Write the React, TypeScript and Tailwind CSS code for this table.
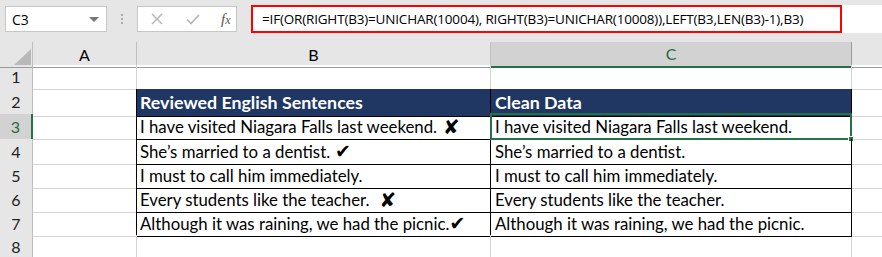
import React from "react";

const Cross = ({ ml }: { ml: string }) => (
  <span className={ml + " font-['DejaVu_Sans',sans-serif] text-[20px] leading-none"}>✘</span>
);
const Tick = ({ ml }: { ml: string }) => (
  <span className={ml + " font-['DejaVu_Sans',sans-serif] text-[19px] leading-none"}>✔</span>
);

const rowsData: { n: number; b: React.ReactNode; c: string }[] = [
  { n: 3, b: <>I have visited Niagara Falls last weekend.<Cross ml="ml-[6px]" /></>, c: "I have visited Niagara Falls last weekend." },
  { n: 4, b: <>She’s married to a dentist.<Tick ml="ml-[5px]" /></>, c: "She’s married to a dentist." },
  { n: 5, b: "I must to call him immediately.", c: "I must to call him immediately." },
  { n: 6, b: <>Every students like the teacher.<Cross ml="ml-[10px]" /></>, c: "Every students like the teacher." },
  { n: 7, b: <>Although it was raining, we had the picnic.<Tick ml="ml-0" /></>, c: "Although it was raining, we had the picnic." },
];

const grid = "grid grid-cols-[33px_104px_354px_361px_1fr]";

function RowHead({ n, active = false }: { n: number; active?: boolean }) {
  return (
    <div
      className={
        "flex items-center justify-center border-b border-[#d4d4d4] text-[16px] " +
        (active
          ? "bg-[#d2d2d2] border-r-2 border-r-[#217346] text-[#1e6b40]"
          : "bg-[#e6e6e6] border-r border-r-[#bfbfbf] text-[#222]")
      }
    >
      {n}
    </div>
  );
}

export default function App() {
  return (
    <div className="w-[882px] h-[257px] overflow-hidden bg-[#e6e6e6] font-['Lato',sans-serif] text-black">
      {/* formula bar */}
      <div className="flex h-[42px] items-start pt-[5px]">
        <div className="ml-[5px] mt-[1px] flex h-[26px] w-[102px] items-center justify-between border border-[#c6c6c6] bg-white pl-[6px] pr-[7px] font-['Open_Sans',sans-serif] text-[14px]">
          <span>C3</span>
          <span className="h-0 w-0 border-x-[5px] border-t-[5px] border-x-transparent border-t-[#777]" />
        </div>
        <div className="ml-[14px] mt-[9px] flex flex-col gap-[2px]">
          <span className="h-[2px] w-[2px] bg-[#aaa]" />
          <span className="h-[2px] w-[2px] bg-[#aaa]" />
          <span className="h-[2px] w-[2px] bg-[#aaa]" />
        </div>
        <div className="ml-[14px] mt-[1px] flex h-[26px] w-[100px] items-center border border-[#c6c6c6] bg-white">
          <svg className="ml-[13px]" width="12" height="12" viewBox="0 0 12 12">
            <path d="M1 1L11 11M11 1L1 11" stroke="#b4b4b4" strokeWidth="1.4" fill="none" />
          </svg>
          <svg className="ml-[23px]" width="14" height="11" viewBox="0 0 14 11">
            <path d="M1 5.5L5 9.5L13 1" stroke="#b4b4b4" strokeWidth="1.6" fill="none" />
          </svg>
          <span className="ml-[21px] font-['Liberation_Serif',serif] text-[15px] italic text-[#555]">
            f<span className="text-[12px]">x</span>
          </span>
        </div>
        <div className="ml-[14px] flex h-[28px] flex-1 bg-white">
          <div className="flex h-[28px] w-[591px] items-center border-2 border-[#ff0000] pl-[9px] font-['Open_Sans',sans-serif] text-[13.5px] tracking-[-0.18px]">
            =IF(OR(RIGHT(B3)=UNICHAR(10004), RIGHT(B3)=UNICHAR(10008)),LEFT(B3,LEN(B3)-1),B3)
          </div>
        </div>
      </div>

      {/* column headers */}
      <div className={grid + " h-[23px] text-[16px]"}>
        <div className="relative border-r border-b border-[#9b9b9b] border-r-[#bfbfbf]">
          <svg className="absolute right-[1px] bottom-[2px]" width="17" height="16" viewBox="0 0 17 16">
            <path d="M17 0L17 16L0 16Z" fill="#b9b9b9" />
          </svg>
        </div>
        <div className="flex items-center justify-center border-r border-r-[#bfbfbf] border-b border-b-[#9b9b9b]">A</div>
        <div className="flex items-center justify-center border-r border-r-[#bfbfbf] border-b border-b-[#9b9b9b]">B</div>
        <div className="flex items-center justify-center border-r border-r-[#9b9b9b] border-b-2 border-b-[#217346] bg-[#d2d2d2] text-[#1e6b40]">C</div>
        <div className="border-b border-b-[#9b9b9b]" />
      </div>

      {/* sheet */}
      <div className="bg-white font-['Lato',sans-serif] text-[16.8px]">
        {/* row 1 */}
        <div className={grid + " h-[24px]"}>
          <RowHead n={1} />
          <div className="border-r border-b border-[#d4d4d4]" />
          <div className="border-r border-[#d4d4d4] border-b border-b-black" />
          <div className="border-r border-[#d4d4d4] border-b border-b-black" />
          <div className="border-b border-[#d4d4d4]" />
        </div>
        {/* row 2 */}
        <div className={grid + " h-[25px]"}>
          <RowHead n={2} />
          <div className="border-r border-r-black border-b border-b-[#d4d4d4]" />
          <div className="flex items-center border-r border-b border-black bg-[#203764] pl-[3px] text-[17.8px] font-bold text-white">
            Reviewed English Sentences
          </div>
          <div className="flex items-center border-r border-b border-black bg-[#203764] pl-[4px] text-[17.8px] font-bold text-white">
            Clean Data
          </div>
          <div className="border-b border-[#d4d4d4]" />
        </div>
        {rowsData.map((r) => (
          <div key={r.n} className={grid + (r.n === 3 ? " h-[25px]" : " h-[24px]")}>
            <RowHead n={r.n} active={r.n === 3} />
            <div className="border-r border-r-black border-b border-b-[#d4d4d4]" />
            <div className="flex items-center border-r border-b border-black pl-[3px]">{r.b}</div>
            <div className="relative flex items-center border-r border-b border-black pl-[4px]">
              {r.c}
              {r.n === 3 && (
                <div className="absolute -top-[1px] -left-[1px] -right-[1px] -bottom-[1px] border-2 border-[#217346]">
                  <div className="absolute -right-[4px] -bottom-[4px] h-[6px] w-[6px] border border-white bg-[#217346]" />
                </div>
              )}
            </div>
            <div className="border-b border-[#d4d4d4]" />
          </div>
        ))}
        {/* row 8 */}
        <div className={grid + " h-[24px]"}>
          <RowHead n={8} />
          <div className="border-r border-b border-[#d4d4d4]" />
          <div className="border-r border-b border-[#d4d4d4]" />
          <div className="border-r border-b border-[#d4d4d4]" />
          <div className="border-b border-[#d4d4d4]" />
        </div>
      </div>
    </div>
  );
}
